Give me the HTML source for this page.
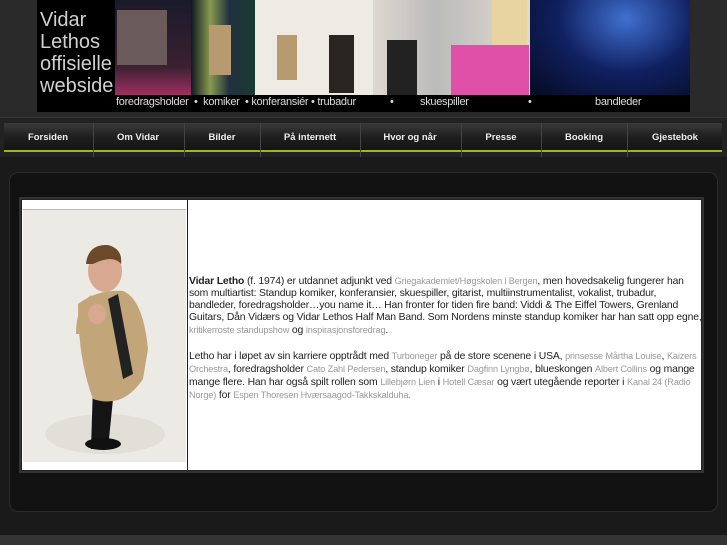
<!DOCTYPE html>
<html><head><meta charset="utf-8"><style>
*{margin:0;padding:0;box-sizing:border-box}
body{width:727px;height:545px;background:#1a1a1a;font-family:"Liberation Sans",sans-serif;position:relative;overflow:hidden}
.top{position:absolute;left:0;top:0;width:727px;height:117px;background:#2a2a2a}
.hdr{position:absolute;left:37px;top:0;width:653px;height:112px;background:#000;overflow:hidden}
.hdr .t{position:absolute;left:3px;top:9px;color:#d0d0d0;font-size:20px;line-height:22px}
.p{position:absolute;top:0;height:95px}
.cap{position:absolute;top:96px;color:#ddd;font-size:11px;letter-spacing:-.3px;white-space:nowrap}
.nav{position:absolute;left:0;top:117px;width:727px;height:40px;background:#222;border-top:1px solid #333}
.nav .bar{position:absolute;left:4px;top:5px;width:718px;height:29px;background:linear-gradient(#3a3a3a,#1e1e1e 55%,#141414);border-bottom:2px solid #9cb81a}
.nav span{position:absolute;top:14px;color:#eee;font-size:9.5px;font-weight:bold;transform:translateX(-50%);white-space:nowrap}
.nav i{position:absolute;top:5px;width:1px;height:34px;background:#444}
.panel{position:absolute;left:9px;top:172px;width:709px;height:340px;background:#121212;border:1px solid #2c2c2c;border-radius:9px}
.tbl{position:absolute;left:19px;top:197px;width:685px;height:276px;border:2px solid #333;background:#222}
.lc{position:absolute;left:22px;top:200px;width:165px;height:270px;background:#fff}
.rc{position:absolute;left:188px;top:200px;width:513px;height:270px;background:#fff}
.txt{position:absolute;left:189px;top:275px;width:514px;font-size:10.4px;line-height:12.1px;color:#222;letter-spacing:-.16px}
.txt a{color:#999;font-size:9.2px}
.foot{position:absolute;left:0;top:535px;width:727px;height:10px;background:#353535}
</style></head><body>
<div class="top"></div>
<div class="hdr">
 <div class="t">Vidar<br>Lethos<br>offisielle<br>webside</div>
 <div class="p" style="left:78px;width:76px;background:linear-gradient(#1a1a2a,#3a2030 70%,#a03060)"></div>
 <div class="p" style="left:80px;top:10px;width:50px;height:55px;background:#6a5a5a"></div>
 <div class="p" style="left:154px;width:64px;background:linear-gradient(90deg,#101820,#8a9a50 30%,#203040 60%,#1a3a30)"></div>
 <div class="p" style="left:172px;top:25px;width:22px;height:50px;background:#b89a70"></div>
 <div class="p" style="left:218px;width:118px;background:#eeeae4"></div>
 <div class="p" style="left:240px;top:35px;width:20px;height:45px;background:#b89a70"></div>
 <div class="p" style="left:292px;top:35px;width:25px;height:58px;background:#2a2520"></div>
 <div class="p" style="left:336px;width:157px;background:linear-gradient(90deg,#ddd8d0,#bbb 40%,#e0dad0)"></div>
 <div class="p" style="left:350px;top:40px;width:30px;height:55px;background:#222"></div>
 <div class="p" style="left:414px;top:45px;width:78px;height:50px;background:#e050a8"></div>
 <div class="p" style="left:455px;top:0;width:35px;height:45px;background:#e8d4a0"></div>
 <div class="p" style="left:493px;width:160px;background:radial-gradient(ellipse at 60% 20%,#4070d0,#102060 50%,#050a20)"></div>
 <div class="cap" style="left:79px">foredragsholder &nbsp;•&nbsp; komiker &nbsp;•&nbsp;konferansiér • trubadur</div>
 <div class="cap" style="left:353px">•</div>
 <div class="cap" style="left:383px">skuespiller</div>
 <div class="cap" style="left:491px">•</div>
 <div class="cap" style="left:558px">bandleder</div>
</div>
<div class="nav"><div class="bar"></div>
 <i style="left:93px"></i><i style="left:184px"></i><i style="left:260px"></i><i style="left:360px"></i><i style="left:461px"></i><i style="left:541px"></i><i style="left:627px"></i>
 <span style="left:48px">Forsiden</span><span style="left:138px">Om Vidar</span><span style="left:222px">Bilder</span><span style="left:310px">På internett</span><span style="left:410px">Hvor og når</span><span style="left:501px">Presse</span><span style="left:584px">Booking</span><span style="left:675px">Gjestebok</span>
</div>
<div class="panel"></div>
<div class="tbl"></div>
<div class="lc"></div>
<div class="rc"></div>
<svg style="position:absolute;left:23px;top:209px" width="163" height="253">
 <rect width="163" height="253" fill="#eceae4"/>
 <rect x="0" y="0" width="163" height="1" fill="#bbb"/>
 <ellipse cx="82" cy="225" rx="60" ry="20" fill="#e2dfd8"/>
 <path d="M70 175 L68 240 L85 240 L90 190 L100 175 Z" fill="#151515"/>
 <path d="M55 95 Q75 80 100 82 Q120 90 125 140 L120 170 Q100 200 70 190 Q55 150 55 95Z" fill="#c2a67a"/>
 <path d="M85 90 L95 85 L110 165 L100 170 Z" fill="#222"/>
 <path d="M72 92 Q60 100 60 125" stroke="#c2a67a" stroke-width="14" fill="none"/>
 <ellipse cx="74" cy="105" rx="9" ry="10" fill="#d8a890"/>
 <ellipse cx="82" cy="62" rx="17" ry="21" fill="#d8a890"/>
 <path d="M63 55 Q65 35 85 36 Q100 40 98 55 Q90 45 70 55Z" fill="#6a4a2a"/>
 <ellipse cx="80" cy="235" rx="18" ry="6" fill="#111"/>
</svg>
<div class="txt"><b>Vidar Letho</b> (f. 1974) er utdannet adjunkt ved <a>Griegakademiet/Høgskolen i Bergen</a>, men hovedsakelig fungerer han som multiartist: Standup komiker, konferansier, skuespiller, gitarist, multiinstrumentalist, vokalist, trubadur, bandleder, foredragsholder…you name it… Han fronter for tiden fire band: Viddi &amp; The Eiffel Towers, Grenland Guitars, Dån Vidærs og Vidar Lethos Half Man Band. Som Nordens minste standup komiker har han satt opp egne, <a>kritikerroste standupshow</a> og <a>inspirasjonsforedrag</a>.<br><br>Letho har i løpet av sin karriere opptrådt med <a>Turboneger</a> på de store scenene i USA, <a>prinsesse Mårtha Louise</a>, <a>Kaizers Orchestra</a>, foredragsholder <a>Cato Zahl Pedersen</a>, standup komiker <a>Dagfinn Lyngbø</a>, blueskongen <a>Albert Collins</a> og mange mange flere. Han har også spilt rollen som <a>Lillebjørn Lien</a> i <a>Hotell Cæsar</a> og vært utegående reporter i <a>Kanal 24 (Radio Norge)</a> for <a>Espen Thoresen Hværsaagod-Takkskalduha.</a></div>
<div class="foot"></div>
</body></html>
